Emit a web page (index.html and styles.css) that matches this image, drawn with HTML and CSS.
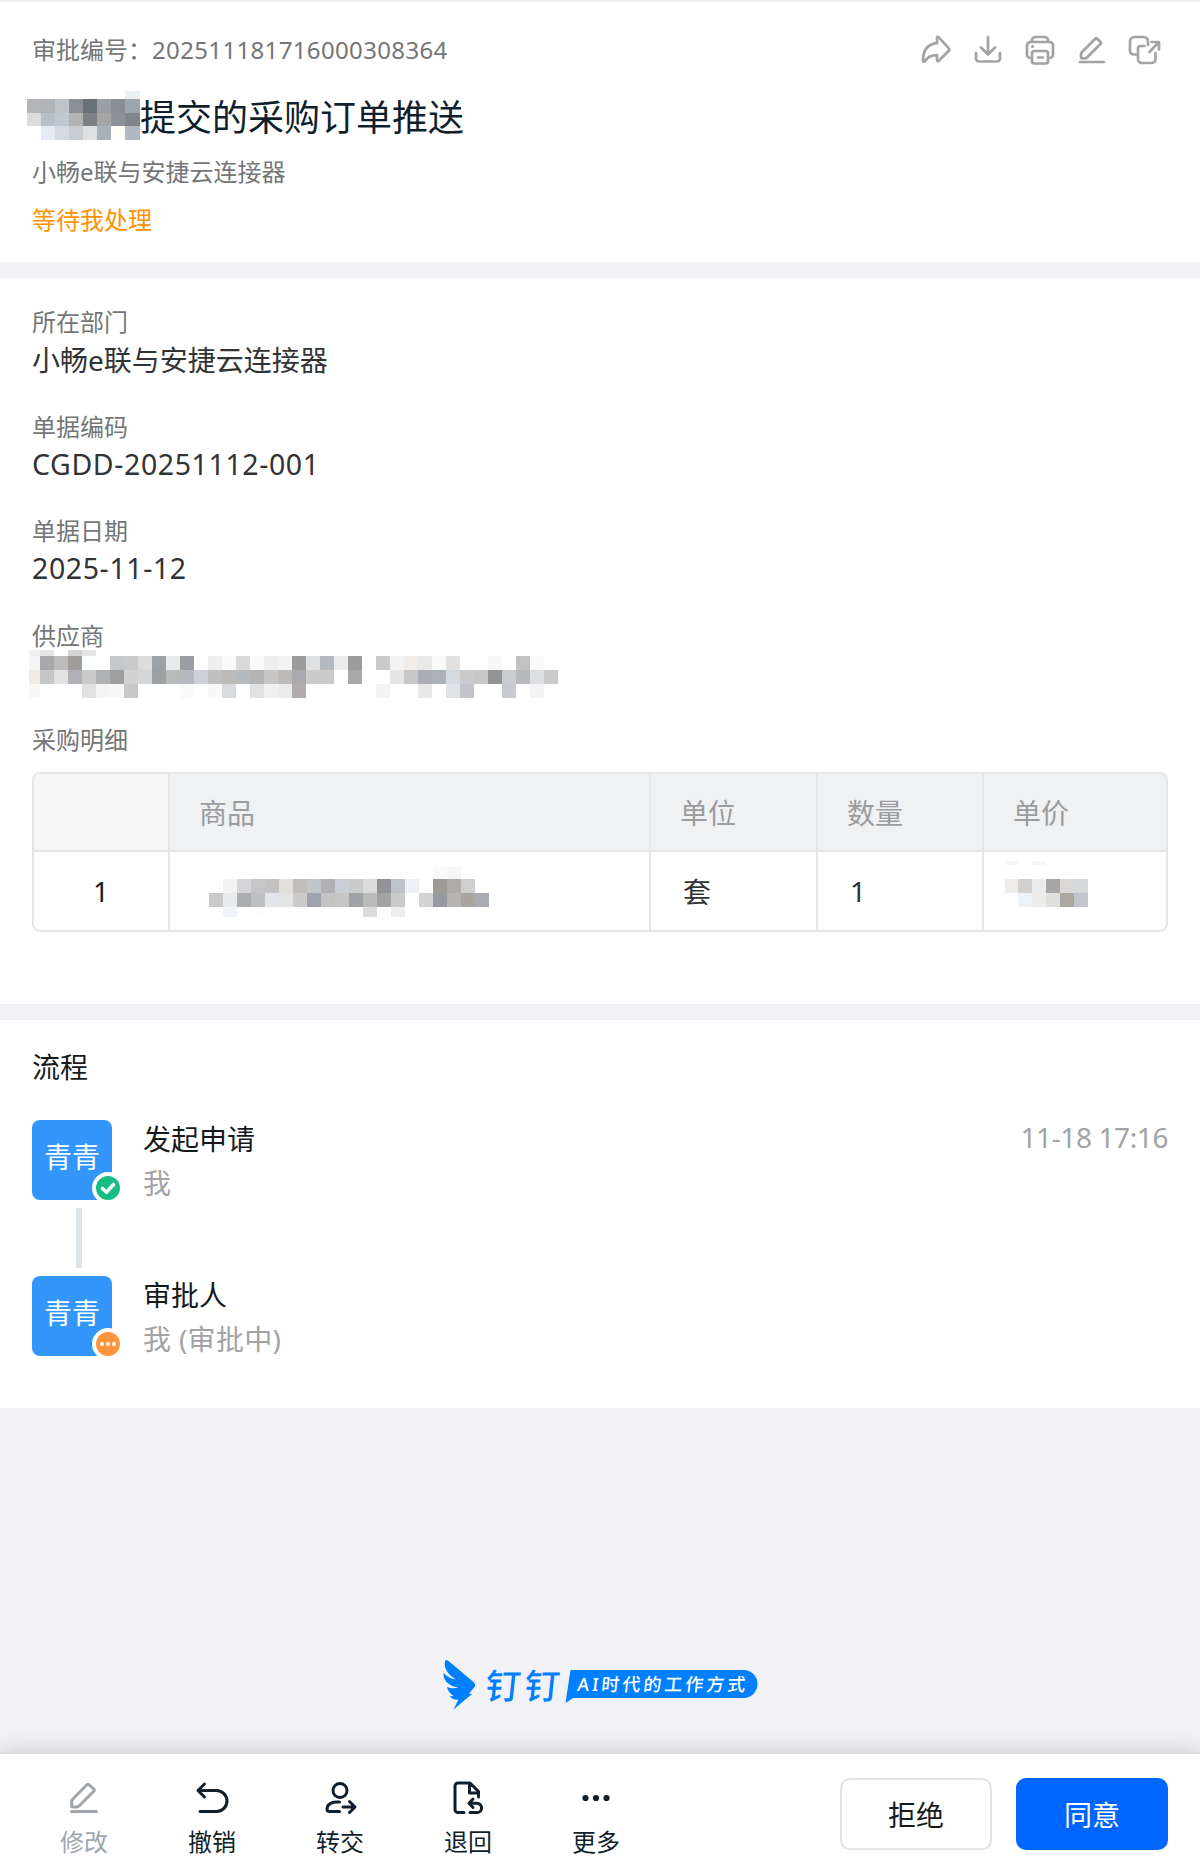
FILE: index.html
```html
<!DOCTYPE html>
<html lang="zh-CN">
<head>
  <meta charset="UTF-8">
  <meta name="viewport" content="width=device-width, initial-scale=1.0">
  <title>采购订单推送</title>
  <link rel="stylesheet" href="styles.css">
</head>
<body>
  <!-- 头部 -->
  <header class="header">
    <div class="header-top">
      <div class="code">审批编号：<span class="code-num">202511181716000308364</span></div>
      <div class="tools">
        <svg width="32" height="32" viewBox="0 0 32 32"><path d="M17 3.500v5.700C8 10 3.200 16 3 26.500c0 1.200 1.400 1.500 2 .5 2.600-4 6-5.800 12-5.800V26c0 1.200 1 1.500 1.900.7L29 16.500c.6-.6.6-1.300 0-1.900L19 3.600c-.9-.9-2-.9-2-.1z"/></svg>
        <svg width="32" height="32" viewBox="0 0 32 32"><path d="M16 3v17M9 13.500l7 7 7-7M4 19v5.500a3 3 0 0 0 3 3h18a3 3 0 0 0 3-3V19"/></svg>
        <svg width="32" height="32" viewBox="0 0 32 32"><path d="M8 7V6a3 3 0 0 1 3-3h10a3 3 0 0 1 3 3v1M8 24H6.500A3.500 3.500 0 0 1 3 20.500v-9A3.500 3.500 0 0 1 6.500 8h19a3.500 3.500 0 0 1 3.500 3.500v9a3.500 3.500 0 0 1-3.500 3.500H24M10.500 17h11a2.500 2.500 0 0 1 2.500 2.500V27a2.500 2.500 0 0 1-2.500 2.500h-11A2.500 2.500 0 0 1 8 27v-7.500a2.500 2.500 0 0 1 2.500-2.500zM14 23.500h5"/><circle class="dot" cx="8.500" cy="12.500" r="1.600"/></svg>
        <svg width="32" height="32" viewBox="0 0 32 32"><path d="M19.300 4.700 5.800 18.300c-.5.5-.8 1.200-.8 2v3c0 .6.400 1 1 1h3c.8 0 1.500-.3 2-.8L24.700 9.800c.5-.5.500-1.200 0-1.700l-3.600-3.400c-.5-.5-1.300-.5-1.800 0zM4 28h24"/></svg>
        <svg width="36" height="32" viewBox="3 0 36 32"><path d="M12.500 20.500H9a4 4 0 0 1-4-4V7.500A4.500 4.500 0 0 1 9.500 3h9A4.500 4.500 0 0 1 23 7.500V11M19.500 12h-4a2.500 2.500 0 0 0-2.500 2.500V25a4 4 0 0 0 4 4H26.500a4 4 0 0 0 4-4v-6M24.500 18 33.500 8.500M26.500 8h7.500v7.500"/></svg>
      </div>
    </div>
    <h1 class="title"><svg class="mosaic" id="m-user" width="113" height="49"></svg>提交的采购订单推送</h1>
    <p class="subtitle">小畅e联与安捷云连接器</p>
    <p class="status">等待我处理</p>
  </header>

  <!-- 表单内容 -->
  <section class="form">
    <div class="field">
      <div class="label">所在部门</div>
      <div class="value">小畅e联与安捷云连接器</div>
    </div>
    <div class="field">
      <div class="label">单据编码</div>
      <div class="value num">CGDD-20251112-001</div>
    </div>
    <div class="field">
      <div class="label">单据日期</div>
      <div class="value num">2025-11-12</div>
    </div>
    <div class="field">
      <div class="label">供应商</div>
      <div class="value"><svg class="mosaic" id="m-supplier" width="530" height="48"></svg></div>
    </div>
    <div class="label">采购明细</div>
    <div class="detail">
      <div class="th index"></div>
      <div class="th">商品</div>
      <div class="th">单位</div>
      <div class="th">数量</div>
      <div class="th">单价</div>
      <div class="td index">1</div>
      <div class="td"><svg class="mosaic" id="m-goods" width="280" height="50"></svg></div>
      <div class="td">套</div>
      <div class="td">1</div>
      <div class="td"><svg class="mosaic" id="m-price" width="104" height="46"></svg></div>
    </div>
  </section>

  <!-- 流程 -->
  <section class="flow">
    <h2 class="flow-title">流程</h2>
    <div class="step">
      <div class="avatar">青青
        <svg class="badge" width="28" height="28" viewBox="0 0 28 28"><circle cx="16" cy="16" r="16" fill="#fff"/><circle cx="16" cy="16" r="12" fill="#15bc83"/><path d="M10.500 16.500l4 3.700 7-7.700" fill="none" stroke="#fff" stroke-width="3.600" stroke-linecap="round" stroke-linejoin="round"/></svg>
      </div>
      <div class="step-text">
        <div class="step-name">发起申请</div>
        <div class="step-user">我</div>
      </div>
      <div class="step-time">11-18 17:16</div>
    </div>
    <div class="line"></div>
    <div class="step">
      <div class="avatar">青青
        <svg class="badge" width="28" height="28" viewBox="0 0 28 28"><circle cx="16" cy="16" r="16" fill="#fff"/><circle cx="16" cy="16" r="12" fill="#ff943e"/><g fill="#fff"><circle cx="10" cy="16" r="2"/><circle cx="16" cy="16" r="2"/><circle cx="22" cy="16" r="2"/></g></svg>
      </div>
      <div class="step-text">
        <div class="step-name">审批人</div>
        <div class="step-user pending">我 (审批中)</div>
      </div>
    </div>
  </section>

  <div class="brand">
    <svg width="316" height="52" viewBox="0 0 316 52">
      <path d="M2.500 0C4 0 5 .5 6.500 1.700L31 22.500c1.600 1.500 1.600 3.500.3 5L26 33.500l3 .4L10.500 49.500l4.800-9.800c-3.300.3-6.600-.8-8.700-3.500l4.200-.3C7.500 34.500 5 31.500 4 27c3.500 1.500 7 1.600 11.500.8C7.500 26.500-.2 22 .500 13c3.500 3.700 7.500 5.800 12.500 6.500C6 15.500-.5 8 2.500 0z" fill="#007fff"/>
      <text class="brand-name" x="42" y="39.500" transform="translate(3.500 0) skewX(-6)">钉钉</text>
      <path d="M127.500 10H300.500a14 14 0 0 1 0 28H130l-7.500 5z" fill="#007fff"/>
      <text class="brand-slogan" x="134" y="31" textLength="168" transform="translate(3 0) skewX(-6)">AI时代的工作方式</text>
    </svg>
  </div>

  <!-- 底部操作栏 -->
  <footer class="footer">
    <div class="actions">
      <div class="action disabled">
        <svg width="36" height="36" viewBox="0 0 36 36"><path d="M20.800 4.800 6.500 19.500c-.5.500-.8 1.200-.8 2V26c0 .6.400 1 1 1h4.100c.8 0 1.400-.3 2-.8L28 11c.5-.5.500-1.300 0-1.800L23 4.800c-.6-.6-1.600-.6-2.200 0zM5.500 31.500h25"/></svg>
        <span>修改</span>
      </div>
      <div class="action">
        <svg width="36" height="36" viewBox="0 0 36 36"><path d="M10.500 4 4 10.500l6.500 6.500M4.500 10.500h18a10.500 10.500 0 0 1 0 21H6"/></svg>
        <span>撤销</span>
      </div>
      <div class="action">
        <svg width="36" height="36" viewBox="0 0 36 36"><circle cx="18" cy="10.500" r="7"/><path d="M17.500 22H14c-5 0-9 3-9 7 0 1.500 1 2.500 2.500 2.500H17.500M21 27h11.500M27.500 21.500 33 27l-5.500 5.500"/></svg>
        <span>转交</span>
      </div>
      <div class="action">
        <svg width="36" height="36" viewBox="0 0 36 36"><path d="M14 32.500H8a3 3 0 0 1-3-3V6a3 3 0 0 1 3-3h12l8.500 8.500V17M19.500 3.500V13h8M23 19l-4 4.300 4 4.200M19.500 23.300h7.500a4.600 4.600 0 0 1 0 9.200h-7"/></svg>
        <span>退回</span>
      </div>
      <div class="action">
        <svg width="36" height="36" viewBox="0 0 36 36"><g class="dot"><circle cx="7.500" cy="18" r="3.100"/><circle cx="18" cy="18" r="3.100"/><circle cx="28.500" cy="18" r="3.100"/></g></svg>
        <span>更多</span>
      </div>
    </div>
    <div class="buttons">
      <button class="btn">拒绝</button>
      <button class="btn primary">同意</button>
    </div>
  </footer>

  <script src="mosaic.js"></script>
</body>
</html>
```

FILE: styles.css
```css
* {
  margin: 0;
  padding: 0;
  box-sizing: border-box;
}

body {
  width: 1200px;
  height: 1872px;
  display: flex;
  flex-direction: column;
  overflow: hidden;
  font-family: "Noto Sans", "Noto Sans CJK SC", sans-serif;
  font-weight: 400;
  background: #f1f1f6;
  color: #171a1d;
}

.mosaic {
  display: block;
  flex: none;
}

/* 头部 */
.header {
  height: 262px;
  padding: 0 32px;
  background: #fff;
  border-top: 2px solid #eee;
}

.header-top {
  height: 94px;
  padding-top: 2px;
  display: flex;
  justify-content: space-between;
  align-items: center;
}

.code {
  font-size: 24px;
  color: #747677;
  line-height: 36px;
}

.code-num {
  letter-spacing: 0.35px;
}

.tools {
  display: flex;
  gap: 20px;
  margin-right: 4px;
}

.tools svg {
  fill: none;
  stroke: #a2a3a5;
  stroke-width: 2.7;
  stroke-linecap: round;
  stroke-linejoin: round;
}

.tools .dot {
  fill: #a2a3a5;
  stroke: none;
}

.title {
  display: flex;
  height: 50px;
  margin-left: -5px;
  font-size: 36px;
  font-weight: 400;
  line-height: 44px;
  color: #111f2c;
}

.title .mosaic {
  margin-top: -5px;
}

.subtitle {
  margin-top: 8px;
  font-size: 24px;
  line-height: 36px;
  color: #747677;
}

.status {
  margin-top: 12px;
  font-size: 24px;
  line-height: 36px;
  color: #ff9200;
}

/* 表单 */
.form {
  height: 726px;
  margin-top: 16px;
  padding: 26px 32px 0;
  background: #fff;
}

.field {
  height: 104.6px;
}

.label {
  font-size: 24px;
  line-height: 36px;
  color: #747677;
}

.value {
  font-size: 28px;
  line-height: 41px;
  color: #323334;
}

.num {
  font-size: 28.5px;
  line-height: 39px;
  letter-spacing: 0.6px;
}

.value .mosaic {
  margin: -4px 0 0 -3px;
}

/* 明细表格 */
.detail {
  width: 1136px;
  height: 160px;
  margin-top: 14px;
  display: grid;
  grid-template-columns: 136px 481px 167px 166px 182px;
  grid-template-rows: 78px 78px;
  border: 2px solid #e5e6e8;
  border-radius: 8px;
  overflow: hidden;
}

.th,
.td {
  display: flex;
  align-items: center;
  padding-left: 29px;
  font-size: 28px;
  border-right: 2px solid #e5e6e8;
}

.detail > :nth-child(5n) {
  border-right: 0;
}

.th {
  background: #f0f1f3;
  color: #9b9c9e;
  border-bottom: 2px solid #e5e6e8;
}

.td {
  padding-left: 32px;
  color: #323334;
}

.index {
  padding-left: 0;
  justify-content: center;
  color: #171a1d;
}

.th.index {
  background: #f6f6f6;
}

.td .mosaic {
  align-self: flex-start;
}

#m-goods {
  margin: 15px 0 0 7px;
}

#m-price {
  margin: 9px 0 0 -11px;
}

/* 流程 */
.flow {
  height: 388px;
  margin-top: 16px;
  padding: 27px 32px 0;
  background: #fff;
}

.flow-title {
  height: 73px;
  font-size: 28px;
  font-weight: 400;
  line-height: 40px;
}

.step {
  display: flex;
  height: 80px;
}

.avatar {
  position: relative;
  width: 80px;
  height: 80px;
  border-radius: 8px;
  background: #3296fa;
  color: #fff;
  font-size: 28px;
  line-height: 75px;
  text-align: center;
}

.badge {
  position: absolute;
  left: 60px;
  top: 52px;
  overflow: hidden;
}

.step-text {
  flex: 1;
  margin-left: 31px;
  font-size: 28px;
  line-height: 44px;
}

.step-name {
  margin-top: -3px;
}

.step-user {
  color: #a2a3a5;
}

.pending {
  letter-spacing: 0.3px;
}

.step-time {
  margin-top: -2px;
  font-size: 28px;
  line-height: 38px;
  letter-spacing: -0.4px;
  color: #a2a3a5;
}

.line {
  width: 6px;
  height: 60px;
  margin: 8px 0 8px 44px;
  background: #dce3ea;
}

.brand {
  flex: 1;
  padding: 252px 0 0 443px;
}

.brand-name {
  font-size: 35px;
  font-weight: 500;
  letter-spacing: 4px;
  fill: #007fff;
}

.brand-slogan {
  font-size: 18px;
  font-weight: 500;
  fill: #fff;
}

/* 底部操作栏 */
.footer {
  flex: none;
  height: 120px;
  display: flex;
  justify-content: space-between;
  padding: 0 32px 0 20px;
  background: #fff;
  border-top: 2px solid #dcdce1;
  box-shadow: 0 0 24px rgba(0, 0, 0, 0.16);
}

.actions {
  display: flex;
  padding-top: 26px;
}

.action {
  width: 128px;
  display: flex;
  flex-direction: column;
  align-items: center;
  font-size: 24px;
  line-height: 36px;
  color: #111f2c;
}

.action svg {
  margin-bottom: 8px;
  fill: none;
  stroke: currentColor;
  stroke-width: 3;
  stroke-linecap: round;
  stroke-linejoin: round;
}

.action .dot {
  fill: currentColor;
  stroke: none;
}

.disabled {
  color: #a0a5ab;
}

.buttons {
  display: flex;
  gap: 24px;
  padding-top: 24px;
}

.btn {
  width: 152px;
  height: 72px;
  border: 2px solid #e2e3e5;
  border-radius: 10px;
  background: #fff;
  box-shadow: 0 4px 0 rgba(0, 0, 0, 0.015);
  font-family: inherit;
  font-size: 28px;
  color: #171a1d;
}

.primary {
  border-color: #0066ff;
  background: #0066ff;
  color: #fff;
}
```

FILE: mosaic.js
```js
// 打码色块：xs / ys 为格子边界，rows 为每行颜色，"-" 表示留空
function drawMosaic(id, xs, ys, rows) {
  const svg = document.getElementById(id);
  rows.forEach((row, r) => {
    row.split(' ').forEach((color, c) => {
      if (color === '-') return;
      const rect = document.createElementNS('http://www.w3.org/2000/svg', 'rect');
      rect.setAttribute('x', xs[c]);
      rect.setAttribute('y', ys[r]);
      rect.setAttribute('width', xs[c + 1] - xs[c]);
      rect.setAttribute('height', ys[r + 1] - ys[r]);
      rect.setAttribute('fill', '#' + color);
      svg.appendChild(rect);
    });
  });
}

// 第一格宽 first，其余每格 14px
function edges(first, count) {
  const xs = [0];
  for (let i = 0; i < count; i++) xs.push(first + 14 * i);
  return xs;
}

drawMosaic('m-user', [0, 14, 28, 42, 56, 70, 84, 98, 113], [0, 8, 22, 35, 49], [
  '- - - - - - - ebf0f3',
  'b4b5b9 b0b4b7 bfc4c8 8b9096 677179 9b9ea2 888e96 9ba6ae',
  'dcdddc b6c0c9 c0c9d3 b2b3b3 7b7f86 a5a5a5 8a9199 80858d',
  '- e6eaf4 d5d9e0 c9cdd0 dfe0e1 a7b1b6 fefdfa b1b9c5'
]);

drawMosaic('m-supplier', edges(11, 38), [0, 6, 20, 34, 48], [
  'f2efec e5e5e5 - d3d3d3 e4e5e5',
  'f5f5f5 a6a8ab bcbcbc a09d9b fcffff - c4c8cb cacaca dcdcdc 9ca2a5 e9eaec 9a9da3 fefefe eeeeee fafafa d9d9d9 fafafa eeeeee f3f3f3 9c9b9d dfe0e2 b3bbc1 e9ebed 9e9c9a - cacaca f3f3f3 f2ede9 e9e9e9 fafafa e1e0df - - f8f8f8 - c3c2c1 fafafa',
  'f0ebe5 c5c6c8 e2e2e0 b0b1b6 cccbca b0b1b3 a09f9f d2d2d2 d5d6d9 9ba0a3 b9bbba b6babf cdd1d7 bfc1c1 bdbbb8 b5babe b4b4b4 c8c6c4 bdbab8 aaa9ad cbcbcb cbcbcb - a8a9ab - - e5e6e8 c8c8c8 acadb2 abb2b6 d5d9e1 cbcbcd c8c7c6 929593 caccd0 b7b9bc dcdee2 cacaca',
  'f9f8f7 - - - e1e1e1 f5f5f5 f7f7f7 c9c8c7 - - - fafafa - faf9f8 d8dcdf - e1e1e1 f0f0f0 ebebeb b1abab - - - - - f3f3f3 - - e8e8e8 - e1e2e5 c3c4ca - - c7cad0 - f5f4f4'
]);

drawMosaic('m-goods', edges(14, 20), [0, 12, 26, 40, 50], [
  '- - - - - - - - - - - - - - - - fafafa f5f7f6',
  '- f3f3f3 d3d5d7 c7c7c9 c3c3c4 e3dfdc bfbeba c2c6c9 b1b0b4 c9ced8 cacccc dadbda 939297 bec2c9 eff0f3 - 9e9b95 afaca7 cfcfcf',
  'cacaca e7ebee abadaf bfc0c2 e2e6ea e5e4e5 cccbc9 a0a3ad c4c3c4 c7c6c4 9fa3a8 bbbbb9 a2a3a4 cacacb - d3d4d2 9898a0 b7b3b1 aaa69f a9adb3',
  '- f0f4f8 - fdfdfd - - - - - - - dcdcdc - eeeeee'
]);

drawMosaic('m-price', edges(13, 6), [0, 4, 18, 32, 46], [
  'f5f6f6 - f5f7f7',
  '-',
  'eeedec d2d1cf eaebed a8a7a6 dad9d8 d6d9dc',
  '- ecf2f7 edecea dee0dd ada7a2 c4c6cf'
]);
```
